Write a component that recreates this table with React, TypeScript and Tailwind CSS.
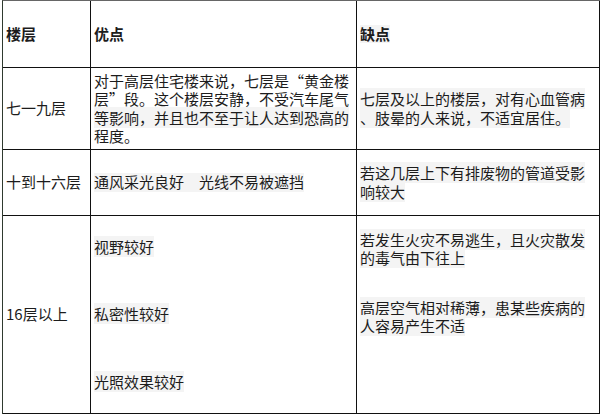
const FONT = "font-['Noto_Sans_CJK_SC','Noto_Sans',sans-serif]";

function Hl({ children }: { children: React.ReactNode }) {
  return <span className="bg-[#f4f4f4]">{children}</span>;
}

function Cell({ children, className = "" }: { children?: React.ReactNode; className?: string }) {
  return (
    <div className={`border-r border-b border-[#111] px-[3px] text-[15px] leading-[18.4px] text-[#1c1c1c] ${className}`}>
      {children}
    </div>
  );
}

export default function App() {
  return (
    <div className={`h-[416px] w-[602px] bg-white pl-[2px] ${FONT}`}>
      <div className="grid w-[598px] grid-cols-[88px_266px_243px] grid-rows-[67px_82px_66px_198px] border-l border-t border-l-[#2f3a2f] border-t-[#666]">
        {/* header */}
        <Cell className="flex items-center font-bold">楼层</Cell>
        <Cell className="flex items-center font-bold">优点</Cell>
        <Cell className="flex items-center font-bold">
          <Hl>缺点</Hl>
        </Cell>

        {/* 七一九层 */}
        <Cell className="flex items-center">七一九层</Cell>
        <Cell className="flex flex-col justify-center whitespace-nowrap">
          <span>对于高层住宅楼来说，七层是“黄金楼</span>
          <span>层”段。这个楼层安静，不受汽车尾气</span>
          <span><Hl>等影响，并且也不至于让人达到恐高的</Hl></span>
          <span>程度。</span>
        </Cell>
        <Cell className="flex flex-col justify-center whitespace-nowrap">
          <span><Hl>七层及以上的楼层，对有心血管病</Hl></span>
          <span><Hl>、肢晕的人来说，不适宜居住。</Hl></span>
        </Cell>

        {/* 十到十六层 */}
        <Cell className="flex items-center">十到十六层</Cell>
        <Cell className="flex items-center whitespace-nowrap">
          <Hl>通风采光良好　光线不易被遮挡</Hl>
        </Cell>
        <Cell className="flex flex-col justify-center whitespace-nowrap">
          <span><Hl>若这几层上下有排废物的管道受影</Hl></span>
          <span><Hl>响较大</Hl></span>
        </Cell>

        {/* 16层以上 */}
        <Cell className="flex items-center">16层以上</Cell>
        <Cell className="flex flex-col justify-center gap-[49px]">
          <span><Hl>视野较好</Hl></span>
          <span><Hl>私密性较好</Hl></span>
          <span><Hl>光照效果较好</Hl></span>
        </Cell>
        <Cell className="flex flex-col gap-[31px] pt-[15px] whitespace-nowrap">
          <div className="flex flex-col">
            <span><Hl>若发生火灾不易逃生，且火灾散发</Hl></span>
            <span><Hl>的毒气由下往上</Hl></span>
          </div>
          <div className="flex flex-col">
            <span><Hl>高层空气相对稀薄，患某些疾病的</Hl></span>
            <span><Hl>人容易产生不适</Hl></span>
          </div>
        </Cell>
      </div>
    </div>
  );
}
